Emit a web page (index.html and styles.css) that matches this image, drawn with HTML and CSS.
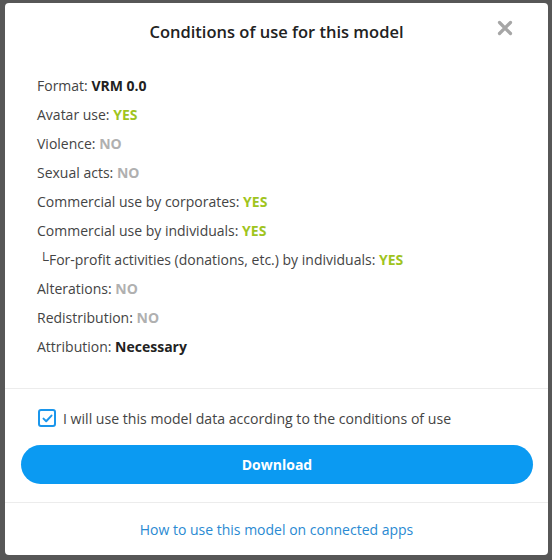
FILE: index.html
```html
<!DOCTYPE html>
<html>
<head>
<meta charset="utf-8">
<link rel="stylesheet" href="styles.css">
</head>
<body>
<div class="modal">
  <div class="header">
    <h2 class="title">Conditions of use for this model</h2>
    <button class="close" aria-label="Close">
      <svg width="16" height="16" viewBox="0 0 16 16"><path d="M2.5 2.5 L13.5 13.5 M13.5 2.5 L2.5 13.5" stroke="#a6a6a6" stroke-width="3.2" stroke-linecap="round"/></svg>
    </button>
  </div>
  <div class="conditions">
    <div class="row">Format: <b class="val">VRM 0.0</b></div>
    <div class="row">Avatar use: <b class="yes">YES</b></div>
    <div class="row">Violence: <b class="no">NO</b></div>
    <div class="row">Sexual acts: <b class="no">NO</b></div>
    <div class="row">Commercial use by corporates: <b class="yes">YES</b></div>
    <div class="row">Commercial use by individuals: <b class="yes">YES</b></div>
    <div class="row sub">└For-profit activities (donations, etc.) by individuals: <b class="yes">YES</b></div>
    <div class="row">Alterations: <b class="no">NO</b></div>
    <div class="row">Redistribution: <b class="no">NO</b></div>
    <div class="row">Attribution: <b class="val">Necessary</b></div>
  </div>
  <div class="actions">
    <label class="agree">
      <span class="checkbox"><svg width="11" height="9" viewBox="0 0 11 9"><path d="M1.5 4.6 L4.2 7.2 L9.5 1.6" fill="none" stroke="#1a96ec" stroke-width="2" stroke-linecap="round" stroke-linejoin="round"/></svg></span>
      <span class="agree-text">I will use this model data according to the conditions of use</span>
    </label>
    <button class="download">Download</button>
  </div>
  <div class="links">
    <a class="apps-link" href="#">How to use this model on connected apps</a>
  </div>
</div>
</body>
</html>
```
FILE: styles.css
```css
html, body {
  margin: 0;
  padding: 0;
}
body {
  background: #575757;
  font-family: "Open Sans", "Noto Sans", sans-serif;
  color: #444;
  padding: 3px 4px 5px 5px;
}
.modal {
  width: 543px;
  height: 552px;
  background: #fff;
  border-radius: 4px;
  display: flex;
  flex-direction: column;
  position: relative;
}
.header {
  height: 56px;
  display: flex;
  align-items: center;
  justify-content: center;
}
.title {
  margin: 0;
  font-size: 16.5px;
  font-weight: 600;
  color: #222;
}
.close {
  position: absolute;
  top: 17px;
  right: 35px;
  width: 16px;
  height: 16px;
  padding: 0;
  border: 0;
  background: none;
  display: flex;
}
.conditions {
  padding: 12px 32px 27px 32px;
  border-bottom: 1px solid #ececec;
}
.row {
  height: 29px;
  line-height: 29px;
  font-size: 14px;
  color: #444;
  white-space: nowrap;
}
.row.sub {
  padding-left: 2px;
}
.val {
  font-weight: 700;
  color: #222;
}
.yes {
  font-weight: 700;
  color: #9fc41e;
}
.no {
  font-weight: 700;
  color: #b0b0b0;
}
.actions {
  padding: 19px 15px 18px 16px;
  border-bottom: 1px solid #ececec;
  display: flex;
  flex-direction: column;
  gap: 17px;
}
.agree {
  display: flex;
  align-items: center;
  gap: 7px;
  height: 20px;
  padding-left: 17px;
}
.checkbox {
  width: 14px;
  height: 14px;
  border: 2px solid #1a96ec;
  border-radius: 3px;
  display: flex;
  align-items: center;
  justify-content: center;
}
.agree-text {
  font-size: 14.1px;
  color: #444;
}
.download {
  height: 39px;
  border: 0;
  border-radius: 20px;
  background: #0b9af2;
  color: #fff;
  font-family: inherit;
  font-size: 14px;
  font-weight: 700;
}
.links {
  flex: 1;
  display: flex;
  align-items: center;
  justify-content: center;
}
.apps-link {
  font-size: 14px;
  color: #2a8ad2;
  text-decoration: none;
}
```
